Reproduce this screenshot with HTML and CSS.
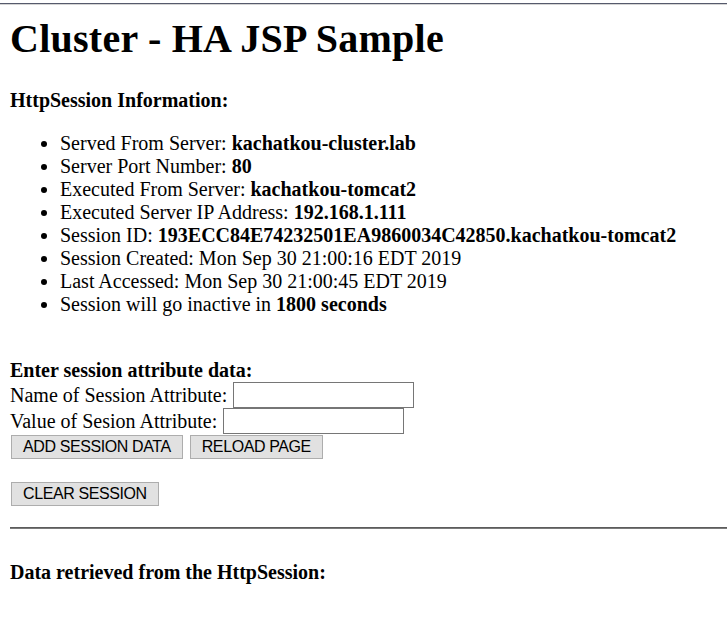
FILE: index.html
```html
<!DOCTYPE html>
<html>
<head>
<meta charset="utf-8">
<title>Cluster - HA JSP Sample</title>
<link rel="stylesheet" href="styles.css">
</head>
<body>
<div class="frame-top"></div>
<div class="page">
  <h1 class="title">Cluster - HA JSP Sample</h1>
  <p class="heading">HttpSession Information:</p>
  <ul class="info">
    <li>Served From Server: <b>kachatkou-cluster.lab</b></li>
    <li>Server Port Number: <b>80</b></li>
    <li>Executed From Server: <b>kachatkou-tomcat2</b></li>
    <li>Executed Server IP Address: <b>192.168.1.111</b></li>
    <li>Session ID: <b>193ECC84E74232501EA9860034C42850.kachatkou-tomcat2</b></li>
    <li>Session Created: Mon Sep 30 21:00:16 EDT 2019</li>
    <li>Last Accessed: Mon Sep 30 21:00:45 EDT 2019</li>
    <li>Session will go inactive in <b>1800 seconds</b></li>
  </ul>
  <form class="attr-form">
    <p class="heading form-heading">Enter session attribute data:</p>
    <div class="field">
      <label for="dataName">Name of Session Attribute:</label>
      <input id="dataName" type="text" class="text-input">
    </div>
    <div class="field">
      <label for="dataValue">Value of Sesion Attribute:</label>
      <input id="dataValue" type="text" class="text-input">
    </div>
    <div class="buttons">
      <button type="button" class="btn">ADD SESSION DATA</button>
      <button type="button" class="btn">RELOAD PAGE</button>
    </div>
    <div class="buttons clear-row">
      <button type="button" class="btn">CLEAR SESSION</button>
    </div>
  </form>
  <hr class="rule">
  <p class="heading data-heading">Data retrieved from the HttpSession:</p>
</div>
</body>
</html>
```

FILE: styles.css
```css
html, body {
  margin: 0;
  padding: 0;
  background: #ffffff;
}

body {
  font-family: "Liberation Serif", "Times New Roman", serif;
  font-size: 20px;
  line-height: 23px;
  color: #000000;
}

.frame-top {
  margin-top: 3px;
  height: 0;
  border-top: 1px solid #565a6c;
  border-bottom: 1px solid #d4d4d4;
}

.page {
  padding: 0 0 0 10px;
}

.title {
  font-size: 40px;
  line-height: 46px;
  font-weight: bold;
  letter-spacing: 0.25px;
  margin: 11px 0 27px 0;
}

.heading {
  font-weight: bold;
  margin: 0;
}

.info {
  margin: 20px 0 0 0;
  padding-left: 50px;
}

.info li {
  line-height: 23px;
}

.attr-form {
  margin: 0;
}

.form-heading {
  margin-top: 43px;
}

.field {
  display: flex;
  align-items: center;
  gap: 5px;
  height: 26px;
}

.text-input {
  box-sizing: border-box;
  width: 181px;
  height: 26px;
  margin: 0 0 0 1px;
  padding: 1px 2px;
  border: 1px solid #767676;
  background: #ffffff;
  font-family: "Liberation Sans", Arial, sans-serif;
  font-size: 16px;
}

.buttons {
  display: flex;
  gap: 6px;
  margin-top: 1px;
}

.clear-row {
  margin-top: 23px;
}

.btn {
  box-sizing: border-box;
  height: 24px;
  margin: 0 0 0 1px;
  padding: 0 11px;
  border: 1px solid #adadad;
  background: #e1e1e1;
  color: #000000;
  font-family: "Liberation Sans", Arial, sans-serif;
  font-size: 16px;
  letter-spacing: -0.4px;
  line-height: 22px;
}

.rule {
  margin: 21px 0 0 0;
  height: 0;
  border: 0;
  border-top: 1px solid #5c5c5c;
  border-bottom: 1px solid #7a7a7a;
}

.data-heading {
  margin-top: 32px;
}
```
